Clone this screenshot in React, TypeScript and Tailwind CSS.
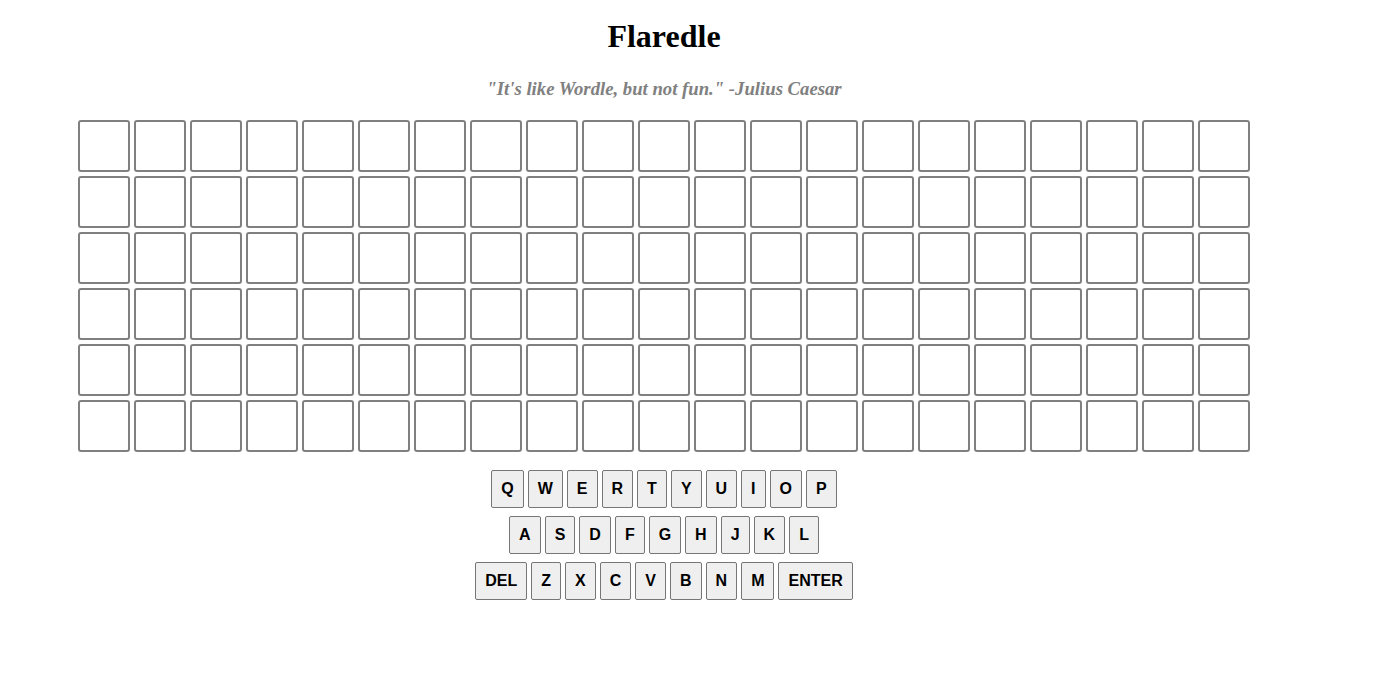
import React from 'react'

const ROWS = 6
const COLS = 21

const keyRows = [
  ['Q', 'W', 'E', 'R', 'T', 'Y', 'U', 'I', 'O', 'P'],
  ['A', 'S', 'D', 'F', 'G', 'H', 'J', 'K', 'L'],
  ['DEL', 'Z', 'X', 'C', 'V', 'B', 'N', 'M', 'ENTER'],
]

function Tile() {
  return <div className="w-[52px] h-[52px] border-2 border-[#808080] rounded-[3px] bg-white" />
}

function Key({ label }: { label: string }) {
  return (
    <button
      type="button"
      className="h-[38px] px-[9px] leading-[18px] text-[16px] font-bold text-black bg-[#efefef] border border-[#767676] rounded-[2px] font-['Liberation_Sans',Arial,sans-serif]"
    >
      {label}
    </button>
  )
}

export default function App() {
  return (
    <div className="w-[1328px] flex flex-col items-center bg-white font-['Liberation_Serif','Times_New_Roman',serif]">
      <h1 className="mt-[12px] text-[32px] font-bold leading-normal text-black">Flaredle</h1>
      <p className="mt-[15px] text-[18.72px] font-bold italic leading-normal text-[#808080]">
        "It's like Wordle, but not fun." -Julius Caesar
      </p>

      <div className="mt-[17px] flex flex-col gap-[4px]">
        {Array(ROWS).fill(0).map((_, r) => (
          <div key={r} className="flex gap-[4px]">
            {Array(COLS).fill(0).map((_, c) => (
              <Tile key={c} />
            ))}
          </div>
        ))}
      </div>

      <div className="mt-[18px] flex flex-col items-center gap-[8px]">
        {keyRows.map((row, i) => (
          <div key={i} className="flex gap-[4px]">
            {row.map((k) => (
              <Key key={k} label={k} />
            ))}
          </div>
        ))}
      </div>
    </div>
  )
}
